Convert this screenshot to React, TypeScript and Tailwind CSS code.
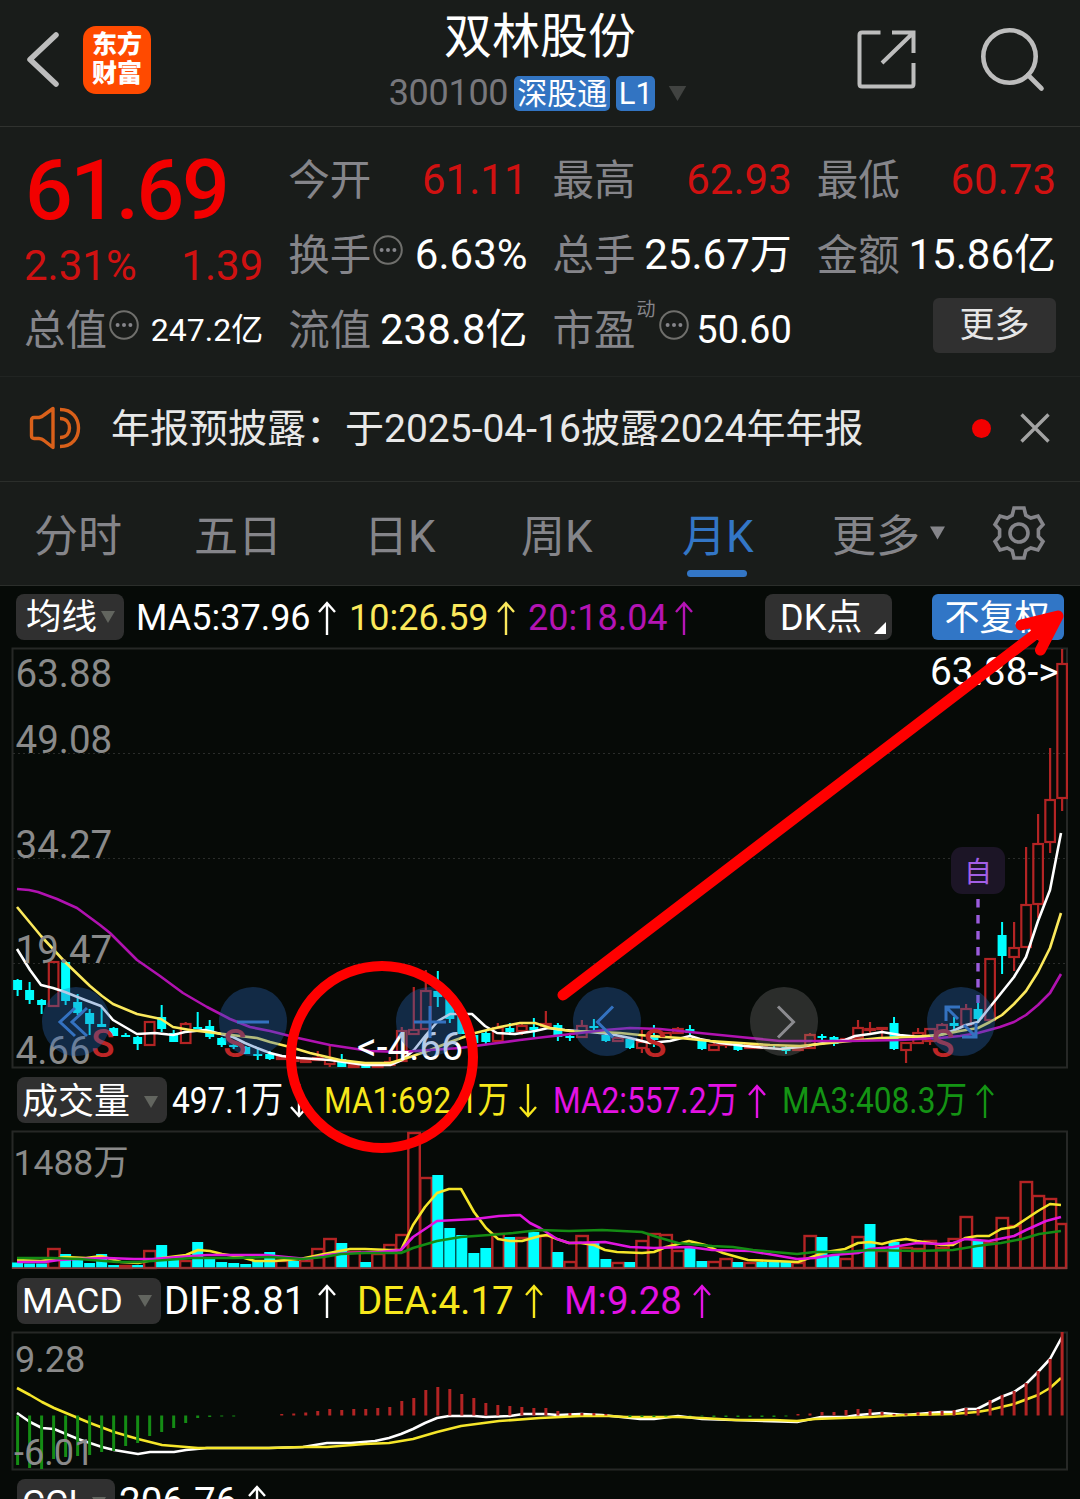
import { ReactNode } from "react";
import clsx from "clsx";

const STEP = 12.006;
const FIRST_X = 17.6;
const xAt = (i: number) => FIRST_X + i * STEP;

const RED = "#b32424";
const CYAN = "#00ffff";

// [up, high, bodyTop, bodyBottom, low]
type Candle = [number, number, number, number, number];

const candles: Candle[] = [
  [0, 979, 980, 990, 996], [0, 982, 990, 1000, 1004], [0, 999, 1000, 1005, 1014], [1, 961, 962, 1006, 1006],
  [0, 961, 962, 1001, 1005], [0, 994, 1002, 1013, 1015], [0, 1009, 1013, 1024, 1035], [0, 1007, 1024, 1027, 1027],
  [0, 1027, 1028, 1036, 1036], [0, 1033, 1035, 1037, 1037], [0, 1036, 1037, 1044, 1050], [1, 1021, 1022, 1045, 1046],
  [0, 1005, 1017, 1029, 1032], [0, 1030, 1033, 1042, 1042], [1, 1022, 1024, 1043, 1043], [0, 1012, 1027, 1029, 1029],
  [0, 1020, 1026, 1037, 1039], [0, 1037, 1038, 1045, 1047], [0, 1043, 1045, 1047, 1049], [0, 1046, 1047, 1054, 1054],
  [0, 1049, 1054, 1056, 1060], [0, 1051, 1054, 1059, 1060], [1, 1057, 1057, 1059, 1059], [1, 1058, 1059, 1061, 1061],
  [1, 1058, 1060, 1062, 1062], [1, 1051, 1058, 1060, 1060], [1, 1046, 1060, 1064, 1067], [0, 1054, 1059, 1067, 1067],
  [1, 1063, 1065, 1067, 1068], [0, 1063, 1065, 1068, 1068], [1, 1065, 1065, 1067, 1067], [1, 1057, 1062, 1065, 1065],
  [1, 1027, 1031, 1061, 1062], [1, 987, 1030, 1034, 1035], [1, 970, 991, 1029, 1029], [0, 971, 991, 997, 1007],
  [0, 998, 999, 1019, 1023], [0, 1011, 1012, 1034, 1034], [0, 1032, 1035, 1043, 1045], [0, 1030, 1033, 1042, 1044],
  [1, 1023, 1028, 1041, 1041], [0, 1023, 1028, 1032, 1035], [1, 1022, 1026, 1031, 1035], [0, 1018, 1027, 1030, 1037],
  [1, 1011, 1024, 1026, 1027], [0, 1023, 1025, 1037, 1041], [0, 1033, 1036, 1038, 1041], [1, 1020, 1026, 1037, 1037],
  [0, 1019, 1026, 1028, 1032], [0, 1033, 1035, 1041, 1042], [1, 1037, 1038, 1041, 1041], [0, 1037, 1039, 1048, 1049],
  [1, 1030, 1042, 1048, 1053], [0, 1025, 1035, 1040, 1047], [1, 1032, 1033, 1037, 1037], [1, 1027, 1029, 1033, 1033],
  [0, 1025, 1029, 1033, 1035], [0, 1040, 1041, 1049, 1050], [1, 1042, 1045, 1050, 1050], [1, 1042, 1044, 1045, 1048],
  [0, 1042, 1043, 1050, 1051], [1, 1044, 1045, 1048, 1048], [1, 1045, 1046, 1048, 1048], [0, 1044, 1045, 1046, 1049],
  [0, 1046, 1047, 1051, 1054], [1, 1047, 1048, 1050, 1050], [1, 1033, 1035, 1048, 1048], [0, 1034, 1036, 1038, 1041],
  [0, 1036, 1037, 1044, 1046], [1, 1038, 1039, 1040, 1041], [1, 1020, 1028, 1038, 1038], [1, 1022, 1029, 1030, 1034],
  [1, 1027, 1028, 1029, 1038], [0, 1017, 1023, 1049, 1050], [1, 1043, 1043, 1050, 1063], [1, 1028, 1033, 1043, 1043],
  [1, 1028, 1029, 1041, 1045], [1, 1023, 1025, 1032, 1032], [0, 1017, 1023, 1026, 1031], [1, 1004, 1009, 1025, 1025],
  [0, 1003, 1009, 1019, 1023], [1, 958, 959, 1020, 1020], [0, 922, 935, 956, 974], [1, 922, 948, 957, 971],
  [1, 847, 905, 947, 947], [1, 814, 844, 904, 918], [1, 748, 800, 842, 853], [1, 649, 664, 798, 811],
];

const ma20 =
  "17,889 29,890 38,892 57,899 77,908 100,925 110,933 123,946 137,960 160,976 183,993 207,1007 230,1019 250,1027 270,1031 298,1038 330,1045 370,1051 400,1052 430,1050 460,1048 490,1044 520,1040 545,1037 580,1033 605,1030 630,1028 660,1029 700,1033 740,1037 780,1041 810,1041 850,1041 900,1040 940,1038 960,1036 978,1033 1000,1027 1014,1022 1026,1015 1038,1005 1050,993 1061,974";
const ma10 =
  "17,907 41,936 65,962 90,986 102,996 113,1004 137,1014 161,1019 173,1027 190,1030 215,1033 240,1036 257,1038 270,1042 290,1047 310,1053 340,1060 365,1063 390,1063 410,1057 430,1050 450,1042 475,1033 500,1027 520,1023 535,1023 550,1028 570,1031 600,1032 620,1033 650,1036 680,1038 710,1041 740,1043 770,1045 800,1046 820,1044 850,1041 880,1038 910,1037 940,1035 960,1031 978,1028 990,1022 1002,1015 1014,1004 1026,991 1038,972 1050,948 1061,913";
const ma5 =
  "17,949 30,970 41,985 53,988 65,992 85,1000 101,1006 113,1020 137,1034 155,1033 173,1035 185,1032 205,1030 221,1034 233,1037 245,1043 257,1048 270,1053 282,1056 300,1058 330,1060 365,1065 390,1065 402,1060 414,1050 426,1035 438,1021 450,1014 472,1014 485,1026 497,1033 515,1034 535,1031 548,1028 565,1030 590,1032 610,1034 630,1038 650,1043 670,1041 690,1036 700,1039 720,1043 745,1046 780,1049 800,1047 830,1042 845,1040 855,1036 870,1034 882,1032 900,1035 920,1037 940,1035 955,1030 966,1025 978,1022 990,1007 1014,977 1026,957 1038,921 1050,890 1061,833";

// positive = up month, negative = down month; value is the bar's top edge
const volumes = [
  -1262.5, -1263.5, -1263.5, 1248, -1254, -1260, -1263, -1254, -1265, 1265, -1265, 1250, -1245, -1260, 1260,
  -1242, -1258, -1262, -1263, -1264, -1260, -1252, 1260, -1261, 1260, 1248, 1238, -1243, 1251, -1262, 1253, 1244,
  1234, 1132, 1177, -1175, -1228, -1235, -1253, -1248, 1233, -1237, 1237, -1232, 1235, -1252, 1261, 1235, -1242,
  -1259, 1262, -1262, 1240, 1233, 1234, 1250, -1247, -1261, 1261, 1258, -1262, 1262, -1262, -1262, -1262, 1262,
  1235, -1237, -1255, 1258, 1236, -1224, 1250, -1242, 1247, 1248, 1240, 1247, 1238, 1216, -1240, 1242, 1217, 1225,
  1181, 1195, 1198, 1223,
];

const volMa1 =
  "17,1260 41,1261 65,1257 86,1258 101,1256 121,1262 138,1263 162,1258 186,1255 198,1250 210,1251 222,1254 241,1257 255,1261 275,1261 300,1259 324,1254 350,1249 365,1249 389,1250 401,1250 413,1225 425,1207 437,1193 449,1189 461,1189 474,1212 486,1228 498,1239 510,1241 522,1241 540,1236 547,1235 557,1239 569,1243 581,1243 594,1245 605,1250 617,1252 642,1253 654,1252 666,1247 678,1244 689,1241 705,1245 723,1253 748,1260 774,1261 798,1262 812,1257 826,1252 845,1249 858,1243 870,1242 882,1244 893,1241 906,1239 917,1241 930,1243 941,1245 953,1245 965,1238 977,1236 989,1236 1001,1229 1014,1227 1026,1219 1038,1211 1050,1204 1061,1205";
const volMa2 =
  "17,1262 45,1262 59,1260 77,1259 107,1258 134,1259 152,1259 179,1257 207,1255 241,1255 265,1255 286,1257 307,1259 327,1255 348,1253 379,1252 401,1250 413,1237 437,1221 475,1219 499,1216 520,1215 530,1223 540,1228 557,1239 569,1243 605,1242 630,1247 654,1248 689,1247 712,1250 750,1251 774,1255 797,1259 815,1258 833,1255 858,1253 870,1249 893,1247 917,1243 941,1244 953,1243 965,1239 989,1241 1014,1236 1026,1230 1046,1221 1061,1217";
const volMa3 =
  "17,1258 52,1258 79,1259 117,1262 138,1262 152,1261 193,1258 234,1258 269,1257 303,1259 324,1257 341,1254 365,1253 401,1253 413,1248 437,1241 461,1237 489,1235 513,1233 540,1230 569,1231 602,1230 642,1232 657,1237 678,1243 712,1246 733,1247 753,1250 774,1252 797,1254 815,1252 845,1252 870,1250 917,1251 953,1250 977,1246 1001,1243 1022,1239 1039,1234 1061,1231";

const MACD_ZERO = 1415.5;
const macdBars = [
  1465, 1468, 1469, 1459, 1457, 1456, 1455, 1452, 1451, 1446, 1443, 1436, 1432, 1428, 1423, 1418, 1417, 1416.5,
  1416.5, 1415.5, 1415.5, 1415.5, 1414, 1413.5, 1412.5, 1411, 1409, 1410, 1409, 1409, 1408, 1407, 1401, 1398, 1390,
  1387, 1389, 1394, 1398, 1403, 1405, 1406, 1407, 1408, 1408, 1411, 1413, 1413, 1413, 1414, 1415.5, 1417, 1417,
  1417, 1416.5, 1415.5, 1416, 1416.5, 1417, 1417, 1417, 1417, 1417, 1417, 1416.5, 1414, 1413.5, 1412, 1412, 1410,
  1409, 1409, 1412, 1414, 1413.5, 1412, 1411, 1411, 1410, 1408, 1409, 1400, 1395, 1391, 1383, 1371, 1359, 1332,
];
const dif =
  "17,1413 30,1422 42,1428 54,1429 66,1434 78,1439 102,1447 114,1450 138,1454 150,1452 174,1452 186,1450 207,1448 269,1448 303,1447 327,1443 351,1443 375,1441 389,1438 401,1434 413,1429 425,1423 437,1418 449,1416 474,1416 486,1417 510,1416 523,1414 546,1414 558,1415 581,1414 602,1415 640,1419 654,1419 678,1416 702,1419 733,1420 797,1422 821,1417 845,1417 858,1415 882,1413 905,1415 941,1412 953,1412 965,1409 977,1409 989,1403 1001,1397 1014,1392 1026,1384 1038,1372 1050,1359 1062,1337";
const dea =
  "17,1388 30,1395 42,1402 54,1408 66,1413 90,1423 114,1432 138,1439 150,1442 162,1445 198,1448 269,1448 303,1447 327,1447 365,1444 389,1443 413,1439 437,1432 461,1426 499,1421 540,1418 581,1416 609,1416 626,1417 678,1417 702,1418 736,1420 774,1420 797,1421 815,1419 843,1418 870,1417 905,1415 953,1414 977,1412 989,1410 1014,1404 1038,1395 1050,1388 1061,1378";

function Line({ points, color }: { points: string; color: string }) {
  return <polyline points={points} fill="none" stroke={color} strokeWidth={2.6} strokeLinejoin="round" />;
}

function Triangle({ className }: { className?: string }) {
  return (
    <svg viewBox="0 0 14 12" className={clsx("shrink-0", className)} fill="currentColor">
      <path d="M0 0h14L7 12z" />
    </svg>
  );
}

function Arrow({ down }: { down?: boolean }) {
  return (
    <svg viewBox="0 0 20 34" className={clsx("w-5 h-[34px] shrink-0", down && "rotate-180")} fill="none" stroke="currentColor" strokeWidth="2.4">
      <path d="M10 34V2M2 11l8-9 8 9" />
    </svg>
  );
}

function MoreDots() {
  return (
    <svg viewBox="0 0 30 30" className="w-[30px] h-[30px] shrink-0" fill="none" stroke="#6f6f6c" strokeWidth="2">
      <circle cx="15" cy="15" r="13.8" />
      <g fill="#85858a" stroke="none">
        <circle cx="8.6" cy="15" r="2" />
        <circle cx="15" cy="15" r="2" />
        <circle cx="21.4" cy="15" r="2" />
      </g>
    </svg>
  );
}

function Header() {
  return (
    <header className="h-[127px] border-b border-[#30322f] flex">
      <div className="w-[360px] flex pt-[26px] pl-6">
        <svg viewBox="0 0 40 66" className="w-10 h-[66px]" fill="none" stroke="#bdbdbd" strokeWidth="5.5" strokeLinecap="round" strokeLinejoin="round">
          <path d="M32 9L6 33.500L32 58" />
        </svg>
        <div className="ml-[19px] w-[68px] h-[68px] rounded-[13px] bg-[#ff4a00] text-white font-black text-[25px] leading-[29px] text-center pt-[4px]">
          东方
          <br />
          财富
        </div>
      </div>
      <div className="w-[360px] flex flex-col items-center">
        <h1 className="mt-[6px] text-[48px] leading-[62px] text-white">双林股份</h1>
        <div className="flex items-center h-[36px] mt-[7px] -ml-[3px] whitespace-nowrap">
          <span className="text-[36px] leading-[36px] text-[#77777c] -tracking-[0.3px]">300100</span>
          <span className="ml-[6px] w-24 h-[35px] rounded-[5px] bg-[#3274c2] text-white text-[30px] leading-[36px] text-center">深股通</span>
          <span className="ml-[6px] w-[39px] h-[35px] rounded-[5px] bg-[#3274c2] text-white text-[31px] leading-[36px] text-center">L1</span>
          <Triangle className="ml-3 w-[21px] h-[15px] text-[#414341]" />
        </div>
      </div>
      <div className="w-[360px] flex pt-[26px] pl-[137px]">
        <svg viewBox="0 0 60 66" className="w-[60px] h-[66px]" fill="none" stroke="#bdbdbd" strokeWidth="4">
          <path d="M23.500 6.500H5Q2.500 6.500 2.500 9V58Q2.500 60.500 5 60.500H54Q56.500 60.500 56.500 58V37" />
          <path d="M35 6.500H56.500V27M25 37L56 7" />
        </svg>
        <svg viewBox="0 0 66 66" className="ml-[63px] w-[66px] h-[66px]" fill="none" stroke="#bdbdbd" strokeWidth="4.6">
          <circle cx="29.500" cy="30.500" r="26.200" />
          <path d="M48 49L61.500 62.500" strokeLinecap="round" />
        </svg>
      </div>
    </header>
  );
}

interface QuoteCellProps {
  label: string;
  value: string;
  red?: boolean;
  size?: string;
  children?: ReactNode;
}

function QuoteCell({ label, value, red, size = "text-[42px]", children }: QuoteCellProps) {
  return (
    <div className="flex items-center h-[75px] whitespace-nowrap">
      <span className="pt-[2px] text-[41.5px] text-[#85858a] leading-[60px]">{label}</span>
      {children}
      <span className={clsx("ml-auto leading-[60px]", size, red ? "text-[#d01111]" : "text-white")}>{value}</span>
    </div>
  );
}

function Quote() {
  return (
    <section className="h-[250px] border-b border-[#212422] px-[24px] pt-[15px]">
      <div className="grid grid-cols-4 gap-x-[25px]">
        <div className="row-span-2 whitespace-nowrap">
          <div className="mt-[1px] ml-[1px] text-[84px] leading-[96px] font-medium text-[#f20000] -tracking-[2.4px]">61.69</div>
          <div className="mt-[3px] flex justify-between text-[42px] leading-[48px] text-[#d01111]">
            <span>2.31%</span>
            <span>1.39</span>
          </div>
        </div>
        <QuoteCell label="今开" value="61.11" red />
        <QuoteCell label="最高" value="62.93" red />
        <QuoteCell label="最低" value="60.73" red />
        <QuoteCell label="换手" value="6.63%">
          <div className="mb-[10px] ml-[2px]"><MoreDots /></div>
        </QuoteCell>
        <QuoteCell label="总手" value="25.67万" />
        <QuoteCell label="金额" value="15.86亿" />
        <QuoteCell label="总值" value="247.2亿" size="text-[32px]">
          <div className="mb-[10px] ml-[2px]"><MoreDots /></div>
        </QuoteCell>
        <QuoteCell label="流值" value="238.8亿" />
        <QuoteCell label="市盈" value="50.60" size="text-[38px]">
          <span className="self-start mt-[6px] ml-[1px] text-[19px] leading-[24px] text-[#85858a]">动</span>
          <div className="mb-[10px] ml-[3px]"><MoreDots /></div>
        </QuoteCell>
        <button className="justify-self-end mt-[6px] w-[123px] h-[55px] rounded-md bg-[#303030] text-[#e6e6e6] text-[35px] leading-[56px]">更多</button>
      </div>
    </section>
  );
}

function Notice() {
  return (
    <section className="h-[105px] border-b border-[#2b2e2b] flex items-center pb-[2px]">
      <svg viewBox="0 0 52 46" className="ml-[29px] w-[52px] h-[46px]" fill="none" stroke="#d9601a" strokeWidth="3.4" strokeLinejoin="round">
        <path d="M2.500 15Q2.500 12.500 5 12.500H10Q13 12 15 10L24 3.500V42.500L15 35.500Q13 33.500 10 33.500H5Q2.500 33.500 2.500 31Z" />
        <path d="M31 4.500C44 4.500 49.500 14 49.500 23S44 41.500 31 41.500M31 13.500C38 13.500 40.500 18.500 40.500 23S38 32.500 31 32.500" />
      </svg>
      <p className="ml-[30px] pt-[2px] w-[780px] text-[39px] leading-[60px] text-[#e8e8e8] whitespace-nowrap">年报预披露：于2025-04-16披露2024年年报</p>
      <span className="ml-[81px] w-[19px] h-[19px] rounded-full bg-[#f20000]" />
      <svg viewBox="0 0 30 30" className="ml-[29px] w-[30px] h-[30px]" stroke="#a3a3a3" strokeWidth="3.4">
        <path d="M1.500 1.500l27 27M28.500 1.500l-27 27" />
      </svg>
    </section>
  );
}

const tabs = [
  { name: "分时", width: "w-[160px]" },
  { name: "五日", width: "w-[170px]" },
  { name: "日K", width: "w-[157px]" },
  { name: "周K", width: "w-[161px]" },
  { name: "月K", width: "w-[150px]", active: true },
];

function Tabs() {
  return (
    <nav className="h-[104px] border-b border-[#2b2e2b] flex pl-[34px] text-[44px] leading-[64px] text-[#85858a] whitespace-nowrap">
      {tabs.map((tab) => (
        <div key={tab.name} className={clsx("pt-[23px]", tab.width, tab.active && "text-[#3376c6]")}>
          {tab.name}
          {tab.active && <div className="ml-[5px] mt-[1px] w-[60px] h-[7px] rounded-full bg-[#3376c6]" />}
        </div>
      ))}
      <div className="pt-[23px] w-[160px] flex">
        更多
        <Triangle className="ml-[10px] mt-[21px] w-[15px] h-[14px]" />
      </div>
      <svg viewBox="0 0 54 56" className="mt-[23px] w-[54px] h-[56px]" fill="none" stroke="#85858a" strokeWidth="3.6">
        <path d="M22 3h10l1.800 7.200 5 2.900L46 11l5 8.600-4.600 4.800v7.200L51 36.400 46 45l-7.200-2.100-5 2.900L32 53H22l-1.800-7.200-5-2.900L8 45l-5-8.600 4.600-4.800v-7.200L3 19.600 8 11l7.200 2.100 5-2.900z" />
        <circle cx="27" cy="28" r="9" />
      </svg>
    </nav>
  );
}

function Picker({ name, className }: { name: string; className: string }) {
  return (
    <button className={clsx("h-[46px] shrink-0 rounded-lg bg-[#303030] text-white flex items-center justify-between", className)}>
      {name}
      <Triangle className="w-[14px] h-3 text-[#62655f]" />
    </button>
  );
}

interface ReadingProps {
  text: string;
  width: string;
  color: string;
  down?: boolean;
  narrow?: boolean;
}

function Reading({ text, width, color, down, narrow }: ReadingProps) {
  return (
    <div className={clsx("flex items-center shrink-0", color)}>
      <span className={width}>
        <span className={clsx("block", narrow && "origin-left scale-x-[0.855]")}>{text}</span>
      </span>
      <Arrow down={down} />
    </div>
  );
}

function PriceToolbar() {
  return (
    <div className="h-[56px] flex items-center pt-[6px] pl-4 text-[36px] leading-[48px] whitespace-nowrap">
      <Picker name="均线" className="w-[108px] pl-[10px] pr-[9px] text-[35.5px] leading-[50px]" />
      <div className="ml-[12px] pt-[2px] flex gap-[12px]">
        <Reading text="MA5:37.96" width="w-[181px]" color="text-white" />
        <Reading text="10:26.59" width="w-[147px]" color="text-[#fbe95c]" />
        <Reading text="20:18.04" width="w-[146px]" color="text-[#b414b4]" />
      </div>
      <button className="ml-[71px] w-[127px] h-[46px] rounded-lg bg-[#303030] text-white flex pl-[15px]">
        DK点
        <svg viewBox="0 0 12 12" className="ml-3 mt-[28px] w-3 h-3" fill="#fff">
          <path d="M12 0v12H0z" />
        </svg>
      </button>
      <button className="ml-[40px] w-[132px] h-[46px] rounded-md bg-[#3176c6] text-white text-[35px] leading-[50px] pr-[2px]">不复权</button>
    </div>
  );
}

function PriceChart() {
  return (
    <div className="relative h-[431px]">
      <svg viewBox="0 642 1080 431" className="w-full h-full block">
        <path d="M12.500 648.500H1067V1067.500H12.500Z" fill="none" stroke="#262826" strokeWidth="2" />
        <path d="M13 753.500H1067M13 858.500H1067M13 963.500H1067" stroke="#2b2d2b" strokeDasharray="2 3" />
        {candles.map(([up, high, top, bottom, low], i) => {
          const x = xAt(i);
          return up ? (
            <g key={i} stroke={RED} strokeWidth="2.200" fill="none">
              <path d={`M${x} ${high}V${top}M${x} ${bottom}V${low}`} />
              <rect x={x - 4.8} y={top} width="9.6" height={bottom - top} />
            </g>
          ) : (
            <g key={i} fill={CYAN}>
              <rect x={x - 1} y={high} width="2" height={low - high} />
              <rect x={x - 4.5} y={top} width="9" height={bottom - top} />
            </g>
          );
        })}
        <Line points={ma5} color="#fff" />
        <Line points={ma10} color="#fbe95c" />
        <Line points={ma20} color="#b012b0" />
        <g fill="#8a8a8a" fontSize="38.500">
          <text x="15.500" y="686.500">63.88</text>
          <text x="15.500" y="753">49.08</text>
          <text x="15.500" y="858">34.27</text>
          <text x="15.500" y="963">19.47</text>
          <text x="15.500" y="1064">4.66</text>
        </g>
        <g fill="#fff" fontSize="38.800">
          <text x="930" y="684.500">63.88-&gt;</text>
          <text x="357" y="1060">&lt;-4.66</text>
        </g>
        <g fill="#bd2626" fontSize="38.500" fontWeight="500" textAnchor="middle">
          <text x="103" y="1057">S</text>
          <text x="235" y="1057">S</text>
          <text x="655" y="1057">S</text>
          <text x="943" y="1057">S</text>
        </g>
        <rect x="951" y="847" width="54" height="47" rx="11" fill="#1c1526" />
        <text x="978" y="882" fontSize="28" textAnchor="middle" fill="#a35fe6">自</text>
        <path d="M978 899V1003" stroke="#9b5cdc" strokeWidth="3.4" strokeDasharray="8.500 7.500" />
      </svg>
      <ChartControls />
    </div>
  );
}

const controls = [
  { id: "fast-back", d: "M33 20L18 34L33 48M45 20L30 34L45 48" },
  { id: "zoom-out", d: "M18 34H50" },
  { id: "zoom-in", d: "M18 34H50M34 18V50" },
  { id: "back", d: "M40 18.500L24.500 34L40 49.500" },
  { id: "forward", d: "M28 18.500L43.500 34L28 49.500", disabled: true },
  { id: "expand", d: "M19 33V19H33M19 19L31 31M37 37L49 49M35 49H49V35" },
];

function ChartControls() {
  return (
    <div className="absolute left-[42px] top-[345px] flex gap-[109px]">
      {controls.map(({ id, d, disabled }) => (
        <button key={id} className={clsx("w-[68px] h-[69px] rounded-full", disabled ? "bg-[#808080]/30" : "bg-[#2a68ba]/35")}>
          <svg viewBox="0 0 68 68" fill="none" stroke={disabled ? "#8b8b8f" : "#3472c0"} strokeWidth="3">
            <path d={d} />
          </svg>
        </button>
      ))}
    </div>
  );
}

function VolumeChart() {
  return (
    <svg viewBox="0 1127 1080 147" className="w-full h-[147px] block">
      <path d="M12.500 1131.500H1067V1268H12.500Z" fill="none" stroke="#262826" strokeWidth="2" />
      {volumes.map((v, i) => {
        const top = Math.abs(v);
        const left = xAt(i) - 5.5;
        return v > 0 ? (
          <rect key={i} x={left} y={top + 1} width={Math.min(11.5, 1066 - left)} height={1267 - top} fill="none" stroke={RED} strokeWidth="2.4" />
        ) : (
          <rect key={i} x={left} y={top} width="11" height={1267.5 - top} fill={CYAN} />
        );
      })}
      <path d="M12 1268.200H1067" stroke="#8a3a3a" strokeWidth="1.600" />
      <Line points={volMa1} color="#f5e62a" />
      <Line points={volMa2} color="#e015e0" />
      <Line points={volMa3} color="#148c14" />
      <text x="13.500" y="1175" fontSize="35.500" fill="#8a8a8a">1488万</text>
    </svg>
  );
}

function MacdChart() {
  return (
    <svg viewBox="0 1328 1080 145" className="w-full h-[145px] block">
      <path d="M12.500 1332.500H1067V1469.500H12.500Z" fill="none" stroke="#262826" strokeWidth="2" />
      <Line points={dif} color="#fff" />
      <Line points={dea} color="#f5e62a" />
      {macdBars.map((y, i) => (
        <path
          key={i}
          d={`M${xAt(i)} ${MACD_ZERO}V${y}`}
          stroke={y > MACD_ZERO ? "#148c14" : RED}
          strokeWidth="3"
        />
      ))}
      <g fill="#8a8a8a" fontSize="36">
        <text x="15" y="1371.500">9.28</text>
        <text x="14" y="1465">-6.01</text>
      </g>
    </svg>
  );
}

// hand-drawn markup on top of the whole screen
function Markup() {
  return (
    <svg viewBox="0 0 1080 1499" className="absolute inset-0 w-[1080px] h-[1499px] pointer-events-none" fill="none" stroke="#ff0000" strokeLinecap="round" strokeLinejoin="round">
      <circle cx="382" cy="1057" r="91" strokeWidth="10" />
      <path d="M563 995L1050 623" strokeWidth="11" />
      <path d="M1021 625L1058 616L1040.500 650" strokeWidth="11" />
      <path d="M1034 628L1058 616L1043 640Z" strokeWidth="8" fill="#ff0000" />
    </svg>
  );
}

export default function App() {
  return (
    <div
      lang="zh-CN"
      className="relative w-[1080px] h-[1499px] overflow-hidden bg-[#191c1a] font-['Roboto','Noto_Sans_CJK_SC',sans-serif]"
    >
      <Header />
      <Quote />
      <Notice />
      <Tabs />
      <main className="bg-[#060a07] h-[920px]">
        <PriceToolbar />
        <PriceChart />
        <div className="h-[54px] flex items-center pl-[17px] text-[37px] leading-[48px] whitespace-nowrap">
          <Picker name="成交量" className="w-[150px] pt-[3px] pl-[5px] pr-[9px] text-[36px] leading-[50px]" />
          <div className="ml-[5px] pt-[2px] flex gap-[15px]">
            <Reading text="497.1万" width="w-[117px]" color="text-white" down narrow />
            <Reading text="MA1:692.1万" width="w-[194px]" color="text-[#f7e71c]" down narrow />
            <Reading text="MA2:557.2万" width="w-[194px]" color="text-[#e312e3]" narrow />
            <Reading text="MA3:408.3万" width="w-[193px]" color="text-[#149414]" narrow />
          </div>
        </div>
        <VolumeChart />
        <div className="h-[54px] flex items-center pl-[17px] text-[38.5px] leading-[46px] whitespace-nowrap">
          <Picker name="MACD" className="w-[144px] pl-[5px] pr-[9px] text-[35.5px] leading-[48px]" />
          <div className="ml-[3px] flex gap-[20px]">
            <Reading text="DIF:8.81" width="w-[153px]" color="text-white" />
            <Reading text="DEA:4.17" width="w-[167px]" color="text-[#f7e71c]" />
            <Reading text="M:9.28" width="w-[128px]" color="text-[#e312e3]" />
          </div>
        </div>
        <MacdChart />
        <div className="h-[58px] flex items-center pl-[17px] text-[38.5px] leading-[46px] whitespace-nowrap">
          <Picker name="CCI" className="w-[98px] pl-[5px] pr-[9px] pt-[2px] text-[35.5px] leading-[46px]" />
          <div className="ml-[4px] flex">
            <Reading text="206.76" width="w-[128px]" color="text-white" />
          </div>
        </div>
      </main>
      <Markup />
    </div>
  );
}
